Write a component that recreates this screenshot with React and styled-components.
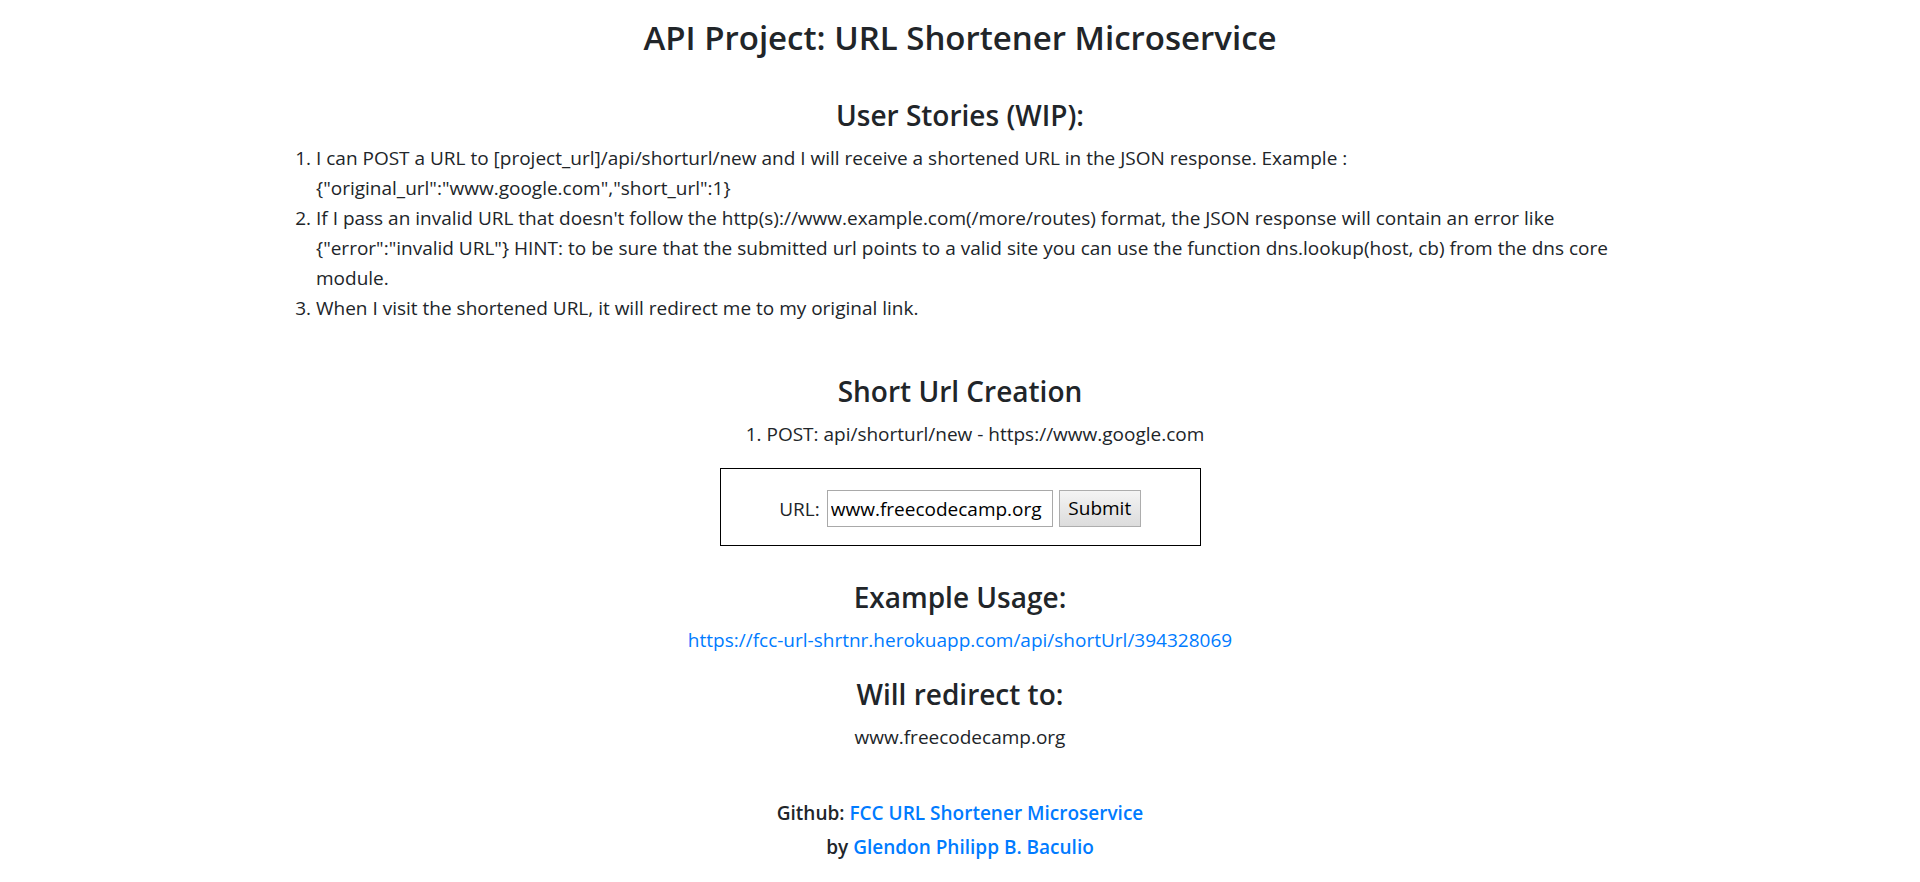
import React from 'react';
import styled, { createGlobalStyle } from 'styled-components';

const GlobalStyle = createGlobalStyle`
  *, *::before, *::after { box-sizing: border-box; }
  html, body { margin: 0; padding: 0; background: #fff; }
  body {
    font-family: "Open Sans", "Noto Sans", sans-serif;
    font-size: 19px;
    line-height: 30px;
    color: #212529;
  }
`;

const Page = styled.div`
  max-width: 1388px;
  margin: 0 auto;
  padding: 17px 0 30px;
`;

const Title = styled.h1`
  margin: 0 0 38px;
  font-size: 33px;
  font-weight: 600;
  line-height: 42px;
  text-align: center;
`;

const Heading = styled.h3`
  margin: ${p => p.$top || 0}px 0 10px;
  font-size: 28px;
  font-weight: 600;
  line-height: 36px;
  text-align: center;
`;

const Stories = styled.ol`
  margin: 0;
  padding-left: 50px;
`;

const CenterList = styled.ol`
  margin: 0;
  padding-left: 30px;
  text-align: center;
  list-style-position: inside;
`;

const Form = styled.form`
  width: 481px;
  height: 78px;
  margin: 19px auto 0;
  border: 1px solid #000;
  display: flex;
  align-items: center;
  justify-content: center;
  gap: 6px;
  padding-top: 3px;
`;

const Label = styled.label`
  color: #212529;
  margin-right: 1px;
`;

const Input = styled.input`
  width: 226px;
  height: 37px;
  border: 1px solid #a9a9a9;
  padding: 1px 3px;
  font: inherit;
  color: #000;
  outline: none;
`;

const Button = styled.button`
  width: 82px;
  height: 37px;
  border: 1px solid #adadad;
  border-radius: 0;
  background: linear-gradient(#f4f4f4, #dcdcdc);
  font: inherit;
  line-height: 1;
  color: #000;
  padding: 0 6px;
`;

const Para = styled.p`
  margin: 0 0 ${p => p.$bottom || 0}px;
  text-align: center;
`;

const Link = styled.a`
  color: #007bff;
  text-decoration: none;
`;

const Footer = styled.div`
  margin-top: 44px;
  text-align: center;
  font-weight: 600;
  line-height: 34px;
`;

export default function App() {
  return (
    <>
      <GlobalStyle />
      <Page>
        <Title>API Project: URL Shortener Microservice</Title>
        <Heading>User Stories (WIP):</Heading>
        <Stories>
          <li>
            I can POST a URL to [project_url]/api/shorturl/new and I will receive a shortened URL in the JSON response. Example : {'{"original_url":"www.google.com","short_url":1}'}
          </li>
          <li>
            If I pass an invalid URL that doesn't follow the http(s)://www.example.com(/more/routes) format, the JSON response will contain an error like {'{"error":"invalid URL"}'} HINT: to be sure that the submitted url points to a valid site you can use the function dns.lookup(host, cb) from the dns core module.
          </li>
          <li>When I visit the shortened URL, it will redirect me to my original link.</li>
        </Stories>

        <Heading $top={50}>Short Url Creation</Heading>
        <CenterList>
          <li>POST: api/shorturl/new - https://www.google.com</li>
        </CenterList>
        <Form onSubmit={e => e.preventDefault()}>
          <Label htmlFor="url_input">URL:</Label>
          <Input id="url_input" type="text" defaultValue="www.freecodecamp.org" />
          <Button type="submit">Submit</Button>
        </Form>

        <Heading $top={33}>Example Usage:</Heading>
        <Para $bottom={21}>
          <Link href="#">https://fcc-url-shrtnr.herokuapp.com/api/shortUrl/394328069</Link>
        </Para>
        <Heading>Will redirect to:</Heading>
        <Para>www.freecodecamp.org</Para>

        <Footer>
          <div>Github: <Link href="#">FCC URL Shortener Microservice</Link></div>
          <div>by <Link href="#">Glendon Philipp B. Baculio</Link></div>
        </Footer>
      </Page>
    </>
  );
}
